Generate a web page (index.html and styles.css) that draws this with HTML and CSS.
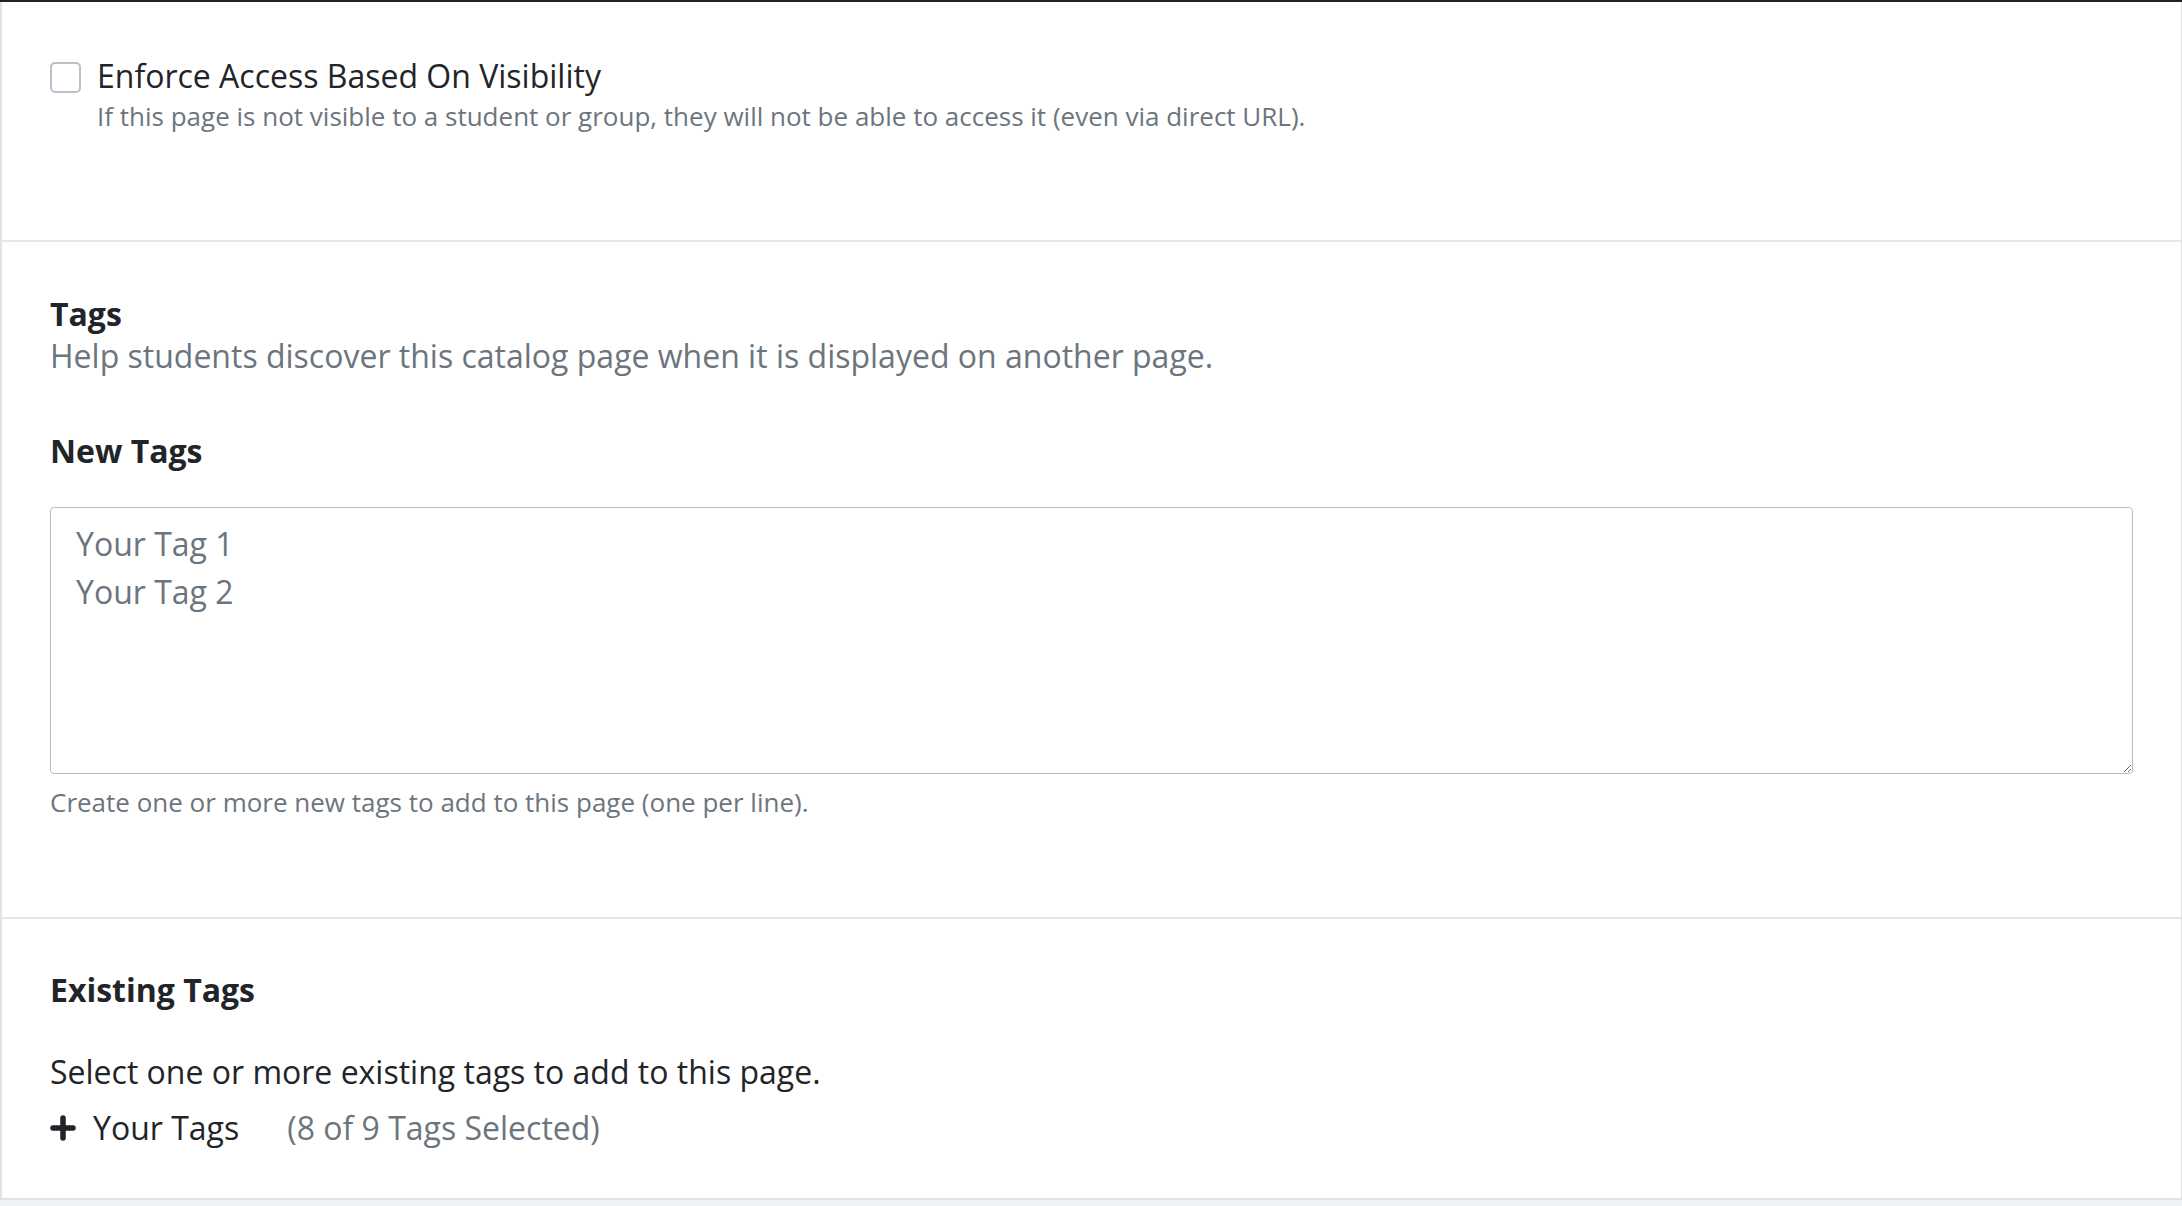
FILE: index.html
```html
<!DOCTYPE html>
<html lang="en">
<head>
<meta charset="utf-8">
<title>Page Settings</title>
<link rel="stylesheet" href="styles.css">
</head>
<body>
<div class="topbar"></div>
<div class="panel">
  <section class="section section-access">
    <div class="check-row">
      <span class="checkbox"></span>
      <div class="check-text">
        <div class="check-title">Enforce Access Based On Visibility</div>
        <div class="check-desc">If this page is not visible to a student or group, they will not be able to access it (even via direct URL).</div>
      </div>
    </div>
  </section>
  <section class="section section-tags">
    <h2 class="heading">Tags</h2>
    <p class="lead">Help students discover this catalog page when it is displayed on another page.</p>
    <label class="heading label-new" for="newtags">New Tags</label>
    <textarea id="newtags" class="tag-input" placeholder="Your Tag 1&#10;Your Tag 2"></textarea>
    <p class="help">Create one or more new tags to add to this page (one per line).</p>
  </section>
  <section class="section section-existing">
    <h2 class="heading">Existing Tags</h2>
    <p class="body-text">Select one or more existing tags to add to this page.</p>
    <div class="toggle-row">
      <svg class="plus" viewBox="0 0 26 26" width="26" height="26" aria-hidden="true">
        <path d="M13 3v20M3 13h20" stroke="#212529" stroke-width="5.5" stroke-linecap="round" fill="none"/>
      </svg>
      <span class="toggle-label">Your Tags</span>
      <span class="toggle-count">(8 of 9 Tags Selected)</span>
    </div>
  </section>
</div>
</body>
</html>
```

FILE: styles.css
```css
html, body {
  margin: 0;
  padding: 0;
}
body {
  background: #eff2f5;
  font-family: "Open Sans", "Liberation Sans", sans-serif;
  color: #212529;
}
.topbar {
  height: 2px;
  background: #222222;
}
.panel {
  background: #ffffff;
  border-left: 2px solid #e2e2e2;
  border-right: 1px solid #e2e2e2;
  border-bottom: 2px solid #e2e2e2;
}
.section {
  padding: 54px 48px 97px 48px;
}
.section + .section {
  border-top: 2px solid #e6e6e6;
}
.section-access {
  padding-top: 54px;
  padding-bottom: 106px;
}
.section-existing {
  padding-top: 53px;
  padding-bottom: 52px;
}
.check-row {
  display: flex;
  align-items: flex-start;
  gap: 16px;
}
.checkbox {
  flex-shrink: 0;
  box-sizing: border-box;
  width: 31px;
  height: 31px;
  margin-top: 6px;
  border: 2px solid #b9c0c9;
  border-radius: 5px;
  background: #fff;
}
.check-title {
  font-size: 32px;
  line-height: 40px;
  color: #212529;
}
.check-desc {
  margin-top: 2px;
  font-size: 26px;
  line-height: 36px;
  color: #6c757d;
}
.heading {
  display: block;
  margin: 0;
  font-size: 32px;
  line-height: 36px;
  font-weight: 700;
  color: #212529;
}
.lead {
  margin: 6px 0 0 0;
  font-size: 32px;
  line-height: 36px;
  color: #6c757d;
}
.label-new {
  margin-top: 59px;
}
.tag-input {
  display: block;
  box-sizing: border-box;
  width: 100%;
  height: 267px;
  margin: 38px 0 0 0;
  padding: 11.5px 25px;
  border: 1.5px solid #b7bec7;
  border-radius: 4px;
  font-family: "Open Sans", "Liberation Sans", sans-serif;
  font-size: 32px;
  line-height: 48px;
  color: #212529;
  background: #fff;
  resize: vertical;
  outline: none;
}
.tag-input::placeholder {
  color: #6c757d;
  opacity: 1;
}
.help {
  margin: 10px 0 0 0;
  font-size: 26px;
  line-height: 36px;
  color: #6c757d;
}
.body-text {
  margin: 46px 0 0 0;
  font-size: 32px;
  line-height: 36px;
  color: #212529;
}
.toggle-row {
  display: flex;
  align-items: center;
  margin-top: 20px;
  font-size: 32px;
  line-height: 36px;
}
.plus {
  flex-shrink: 0;
  margin-right: 17px;
}
.toggle-label {
  color: #212529;
}
.toggle-count {
  margin-left: 48px;
  color: #6c757d;
}
```
